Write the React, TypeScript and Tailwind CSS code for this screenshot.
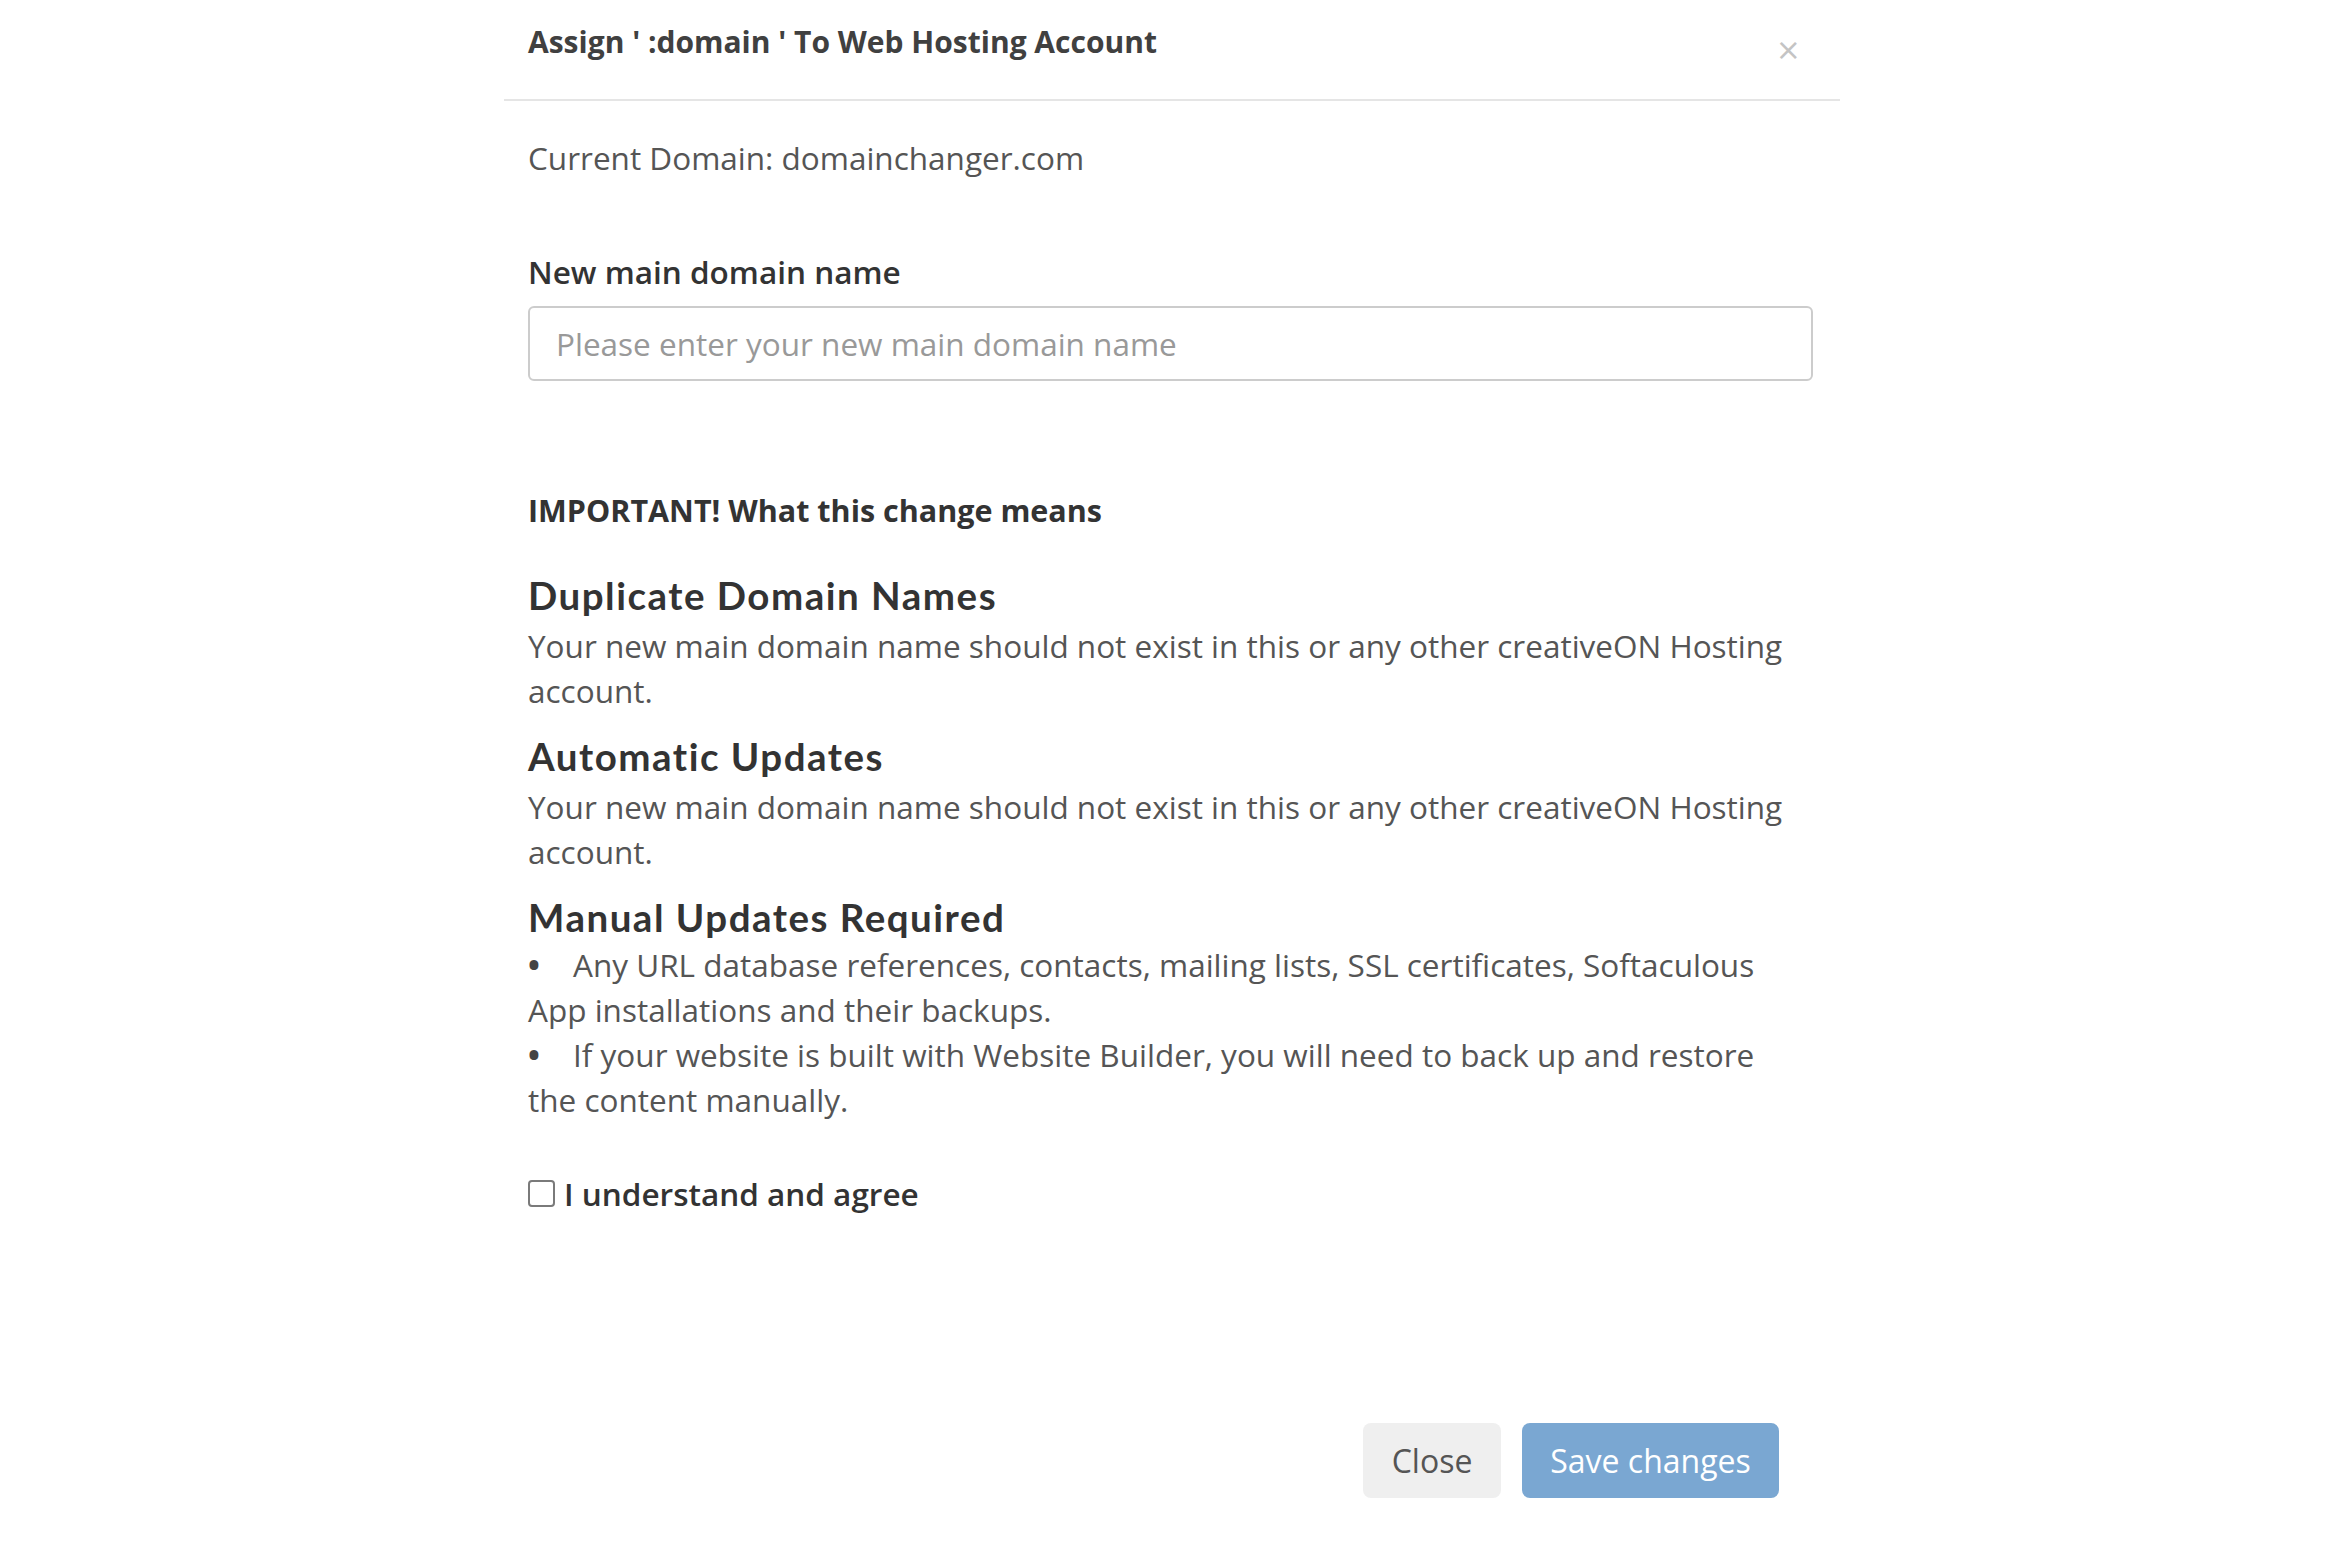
import React from "react";

export default function App() {
  const body = "font-['Open_Sans',sans-serif] text-[31.5px] leading-[45px] text-[#555555]";
  const head = "font-['Lato',sans-serif] font-bold text-[38.5px] leading-[50px] text-[#333333] tracking-[1.5px]";
  return (
    <div className="w-full min-h-[1563px] bg-white flex justify-center">
      <div className="w-[1336px] flex flex-col">
        <div className="h-[101px] border-b-2 border-[#e5e5e5] pl-[24px] pr-[39px] pt-[22px] flex justify-between items-start">
          <div className="font-['Open_Sans',sans-serif] font-bold text-[30px] leading-[40px] text-[#404040]">
            Assign ' :domain ' To Web Hosting Account
          </div>
          <div className="mt-[18px] text-[#c4c4c4] font-['DejaVu_Sans',sans-serif] text-[30px] leading-[20px]">×</div>
        </div>
        <div className="pl-[24px] pr-[27px] flex flex-col">
          <div className={`${body} mt-[34px]`}>Current Domain: domainchanger.com</div>
          <div className="mt-[69px] font-['Open_Sans',sans-serif] font-semibold text-[31.5px] leading-[45px] text-[#333333]">
            New main domain name
          </div>
          <div className="mt-[12px] h-[75px] border-2 border-[#cccccc] rounded-[6px] flex items-center pl-[26px]">
            <span className="font-['Open_Sans',sans-serif] text-[31.5px] text-[#999999]">Please enter your new main domain name</span>
          </div>
          <div className="mt-[107px] font-['Open_Sans',sans-serif] font-bold text-[30.5px] leading-[45px] text-[#333333]">
            IMPORTANT! What this change means
          </div>
          <div className={`${head} mt-[37px]`}>Duplicate Domain Names</div>
          <div className={`${body} mt-[3px]`}>
            Your new main domain name should not exist in this or any other creativeON Hosting
            <br />
            account.
          </div>
          <div className={`${head} mt-[18px]`}>Automatic Updates</div>
          <div className={`${body} mt-[3px]`}>
            Your new main domain name should not exist in this or any other creativeON Hosting
            <br />
            account.
          </div>
          <div className={`${head} mt-[18px]`}>Manual Updates Required</div>
          <div className={`${body}`}>
            <span className="inline-block w-[45px] font-bold text-[#444444]">•</span>Any URL database references, contacts, mailing lists, SSL certificates, Softaculous
            <br />
            App installations and their backups.
            <br />
            <span className="inline-block w-[45px] font-bold text-[#444444]">•</span>If your website is built with Website Builder, you will need to back up and restore
            <br />
            the content manually.
          </div>
          <div className="mt-[49px] flex items-center h-[45px]">
            <span className="w-[27px] h-[27px] border-2 border-[#7a7a7a] rounded-[4px] bg-white mr-[9px]" />
            <span className="font-['Open_Sans',sans-serif] font-semibold text-[31.5px] leading-[45px] text-[#333333]">I understand and agree</span>
          </div>
          <div className="mt-[207px] flex justify-end pr-[34px] gap-[21px]">
            <button className="h-[75px] w-[138px] bg-[#efefef] rounded-[8px] font-['Open_Sans',sans-serif] text-[32px] text-[#555555]">
              Close
            </button>
            <button className="h-[75px] w-[257px] bg-[#7aa7d2] rounded-[8px] font-['Open_Sans',sans-serif] text-[32px] text-white">
              Save changes
            </button>
          </div>
        </div>
      </div>
    </div>
  );
}
